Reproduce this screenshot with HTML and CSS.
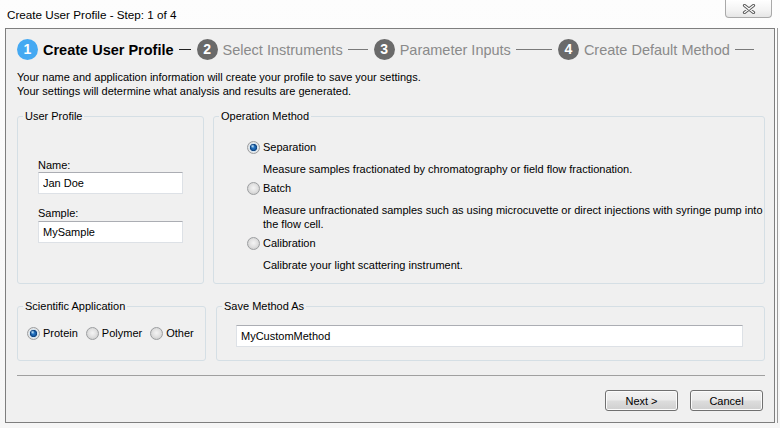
FILE: index.html
```html
<!DOCTYPE html>
<html lang="en">
<head>
    <meta charset="UTF-8">
    <meta name="viewport" content="width=device-width, initial-scale=1.0">
    <title>Create User Profile - Step: 1 of 4</title>
    <link rel="stylesheet" href="styles.css">
</head>
<body>

<div class="window">
    <div class="titlebar">
        <span class="title">Create User Profile - Step: 1 of 4</span>
        <button class="close-btn" type="button" aria-label="Close">
            <svg width="14" height="10" viewBox="0 0 14 10">
                <path d="M2.5 1.5 L11.5 8.5 M11.5 1.5 L2.5 8.5" stroke="#5c5c5c" stroke-width="3.2" stroke-linecap="round" fill="none"/>
                <path d="M2.5 1.5 L11.5 8.5 M11.5 1.5 L2.5 8.5" stroke="#ffffff" stroke-width="1.2" stroke-linecap="round" fill="none"/>
            </svg>
        </button>
    </div>

    <div class="frame">
        <div class="panel">
            <div class="steps">
                <span class="step-num active">1</span>
                <span class="step-label active">Create User Profile</span>
                <span class="step-line dark line-1"></span>
                <span class="step-num">2</span>
                <span class="step-label">Select Instruments</span>
                <span class="step-line line-2"></span>
                <span class="step-num">3</span>
                <span class="step-label">Parameter Inputs</span>
                <span class="step-line line-3"></span>
                <span class="step-num">4</span>
                <span class="step-label">Create Default Method</span>
                <span class="step-line line-4"></span>
            </div>

            <p class="intro">Your name and application information will create your profile to save your settings.<br>
                Your settings will determine what analysis and results are generated.</p>

            <div class="row row-top">
                <fieldset class="group group-profile">
                    <legend>User Profile</legend>
                    <div class="group-body profile-body">
                        <div class="field">
                            <label for="name">Name:</label>
                            <input class="textbox" type="text" id="name" value="Jan Doe">
                        </div>
                        <div class="field">
                            <label for="sample">Sample:</label>
                            <input class="textbox" type="text" id="sample" value="MySample">
                        </div>
                    </div>
                </fieldset>

                <fieldset class="group group-method">
                    <legend>Operation Method</legend>
                    <div class="group-body method-body">
                        <div class="option">
                            <label class="radio-label"><input class="radio" type="radio" name="method" checked> Separation</label>
                            <p class="option-desc">Measure samples fractionated by chromatography or field flow fractionation.</p>
                        </div>
                        <div class="option">
                            <label class="radio-label"><input class="radio" type="radio" name="method"> Batch</label>
                            <p class="option-desc">Measure unfractionated samples such as using microcuvette or direct injections with syringe pump into the flow cell.</p>
                        </div>
                        <div class="option">
                            <label class="radio-label"><input class="radio" type="radio" name="method"> Calibration</label>
                            <p class="option-desc">Calibrate your light scattering instrument.</p>
                        </div>
                    </div>
                </fieldset>
            </div>

            <div class="row row-bottom">
                <fieldset class="group group-app">
                    <legend>Scientific Application</legend>
                    <div class="group-body app-body">
                        <label class="radio-label"><input class="radio" type="radio" name="app" checked> Protein</label>
                        <label class="radio-label"><input class="radio" type="radio" name="app"> Polymer</label>
                        <label class="radio-label"><input class="radio" type="radio" name="app"> Other</label>
                    </div>
                </fieldset>

                <fieldset class="group group-save">
                    <legend>Save Method As</legend>
                    <div class="group-body save-body">
                        <input class="textbox wide" type="text" value="MyCustomMethod">
                    </div>
                </fieldset>
            </div>

            <hr class="separator">

            <div class="actions">
                <button class="btn" type="button">Next &gt;</button>
                <button class="btn" type="button">Cancel</button>
            </div>
        </div>
    </div>
</div>

</body>
</html>
```

FILE: styles.css
```css
body {
    margin: 0;
    font-family: "Liberation Sans", Arial, sans-serif;
    font-size: 11px;
    color: #000;
    background-color: #f4f4f4;
}
.window {
    width: 780px;
    height: 428px;
    background: linear-gradient(to bottom, #fdfdfd 0%, #f6f6f6 100%);
    overflow: hidden;
}
.titlebar {
    height: 28px;
    display: flex;
    justify-content: space-between;
    align-items: flex-start;
}
.title {
    margin: 8px 0 0 7px;
    font-size: 11.7px;
    line-height: 14px;
}
.close-btn {
    width: 47px;
    height: 18px;
    margin-right: 8px;
    padding: 0;
    border: 1px solid #a9a9a9;
    border-top: none;
    border-radius: 0 0 4px 4px;
    background: linear-gradient(to bottom, #ffffff 0%, #f3f3f3 60%, #e6e6e6 100%);
    display: flex;
    justify-content: center;
    align-items: center;
}
.frame {
    width: 770px;
    padding-left: 5px;
    padding-right: 2px;
    border-right: 1px solid #9a9a9a;
}
.panel {
    width: 770px;
    box-sizing: border-box;
    border: 1px solid #7e7e7e;
    background-color: #f0f0f0;
    padding: 10px 9px 11px 11px;
}

/* wizard step header */
.steps {
    display: flex;
    align-items: center;
    gap: 5px;
    height: 21px;
}
.step-num {
    width: 21px;
    height: 21px;
    border-radius: 50%;
    background-color: #6a6a6a;
    color: #fff;
    font-weight: bold;
    font-size: 14px;
    line-height: 21px;
    text-align: center;
    flex-shrink: 0;
}
.step-num.active {
    background-color: #45a9f2;
}
.step-label {
    font-size: 14.5px;
    color: #8a8a8a;
    white-space: nowrap;
}
.step-label.active {
    color: #000;
    font-weight: bold;
}
.step-line {
    height: 1px;
    background-color: #7a7a7a;
    margin-right: 1px;
}
.step-line.dark {
    background-color: #222;
}
.line-1 { width: 12px; }
.line-2 { width: 20px; }
.line-3 { width: 36px; }
.line-4 { width: 19px; }

.intro {
    margin: 10px 0 0;
    line-height: 14px;
}

/* group boxes */
.row {
    display: flex;
}
.row-top {
    margin-top: 11px;
    height: 175px;
    gap: 9px;
}
.row-bottom {
    margin-top: 15px;
    height: 62px;
    gap: 10px;
}
.group {
    margin: 0;
    padding: 0;
    min-width: 0;
    border: 1px solid #d5dfe5;
    border-radius: 3px;
    box-sizing: border-box;
}
.group legend {
    margin-left: 5px;
    padding: 0 2px;
    line-height: 14px;
}
.group-profile { width: 187px; }
.group-method { flex: 1; }
.group-app { width: 189px; }
.group-save { flex: 1; }

.profile-body {
    padding: 36px 0 0 20px;
}
.field label {
    display: block;
    line-height: 13px;
}
.field + .field {
    margin-top: 13px;
}
.field + .field label {
    margin-bottom: 1px;
}
.textbox {
    display: block;
    width: 145px;
    height: 22px;
    box-sizing: border-box;
    margin: 0;
    padding: 0 4px;
    border: 1px solid #dde1e6;
    border-top-color: #abadb3;
    background-color: #fff;
    font-family: inherit;
    font-size: 11px;
    color: #000;
}
.textbox.wide {
    width: 507px;
}

.method-body {
    padding: 17px 0 0 33px;
}
.option + .option {
    margin-top: 5px;
}
.radio-label {
    display: flex;
    align-items: center;
    line-height: 14px;
    white-space: nowrap;
}
.option-desc {
    margin: 8px 0 0 16px;
    max-width: 500px;
    line-height: 14px;
}
.radio {
    appearance: none;
    -webkit-appearance: none;
    width: 13px;
    height: 13px;
    margin: 0 3px 0 0;
    border: 1px solid #9c9ea0;
    border-radius: 50%;
    box-sizing: border-box;
    background: radial-gradient(circle at 50% 45%, #f4f4f4 0, #e2e2e2 45%, #c4c4c4 100%);
    flex-shrink: 0;
}
.radio:checked {
    background:
        radial-gradient(circle at 42% 38%, rgba(210, 240, 255, 0.95) 0, rgba(210, 240, 255, 0) 2px),
        radial-gradient(circle at 50% 50%, #2b7fcf 0, #1a62ad 2px, #0d3f7a 3.4px, #cfe3f2 3.9px, #e6e6e6 5px, #c4c4c4 100%);
}

.app-body {
    display: flex;
    gap: 8px;
    padding: 13px 0 0 9px;
}
.save-body {
    padding: 12px 0 0 19px;
}

.separator {
    margin: 14px 0 0;
    border: none;
    height: 1px;
    background-color: #a0a0a0;
}

.actions {
    margin-top: 14px;
    padding-right: 2px;
    display: flex;
    justify-content: flex-end;
    gap: 12px;
}
.btn {
    width: 73px;
    height: 21px;
    padding: 0;
    border: 1px solid #707070;
    border-radius: 3px;
    background: linear-gradient(to bottom, #f2f2f2 0%, #ebebeb 48%, #dddddd 52%, #cfcfcf 100%);
    box-shadow: inset 0 0 0 1px #fbfbfb;
    font-family: inherit;
    font-size: 11px;
    color: #000;
}
```
